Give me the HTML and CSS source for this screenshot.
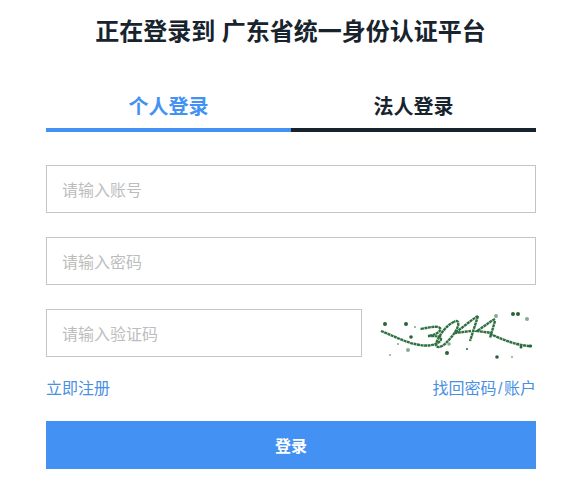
FILE: index.html
```html
<!DOCTYPE html>
<html lang="zh-CN">
<head>
  <meta charset="UTF-8">
  <meta name="viewport" content="width=device-width, initial-scale=1.0">
  <title>广东省统一身份认证平台</title>
  <link rel="stylesheet" href="styles.css">
</head>
<body>
  <div class="login">
    <h1 class="login-title">正在登录到 广东省统一身份认证平台</h1>

    <div class="tabs">
      <div class="tab tab-active">个人登录</div>
      <div class="tab">法人登录</div>
    </div>

    <input class="field" type="text" placeholder="请输入账号">
    <input class="field" type="password" placeholder="请输入密码">

    <div class="captcha-row">
      <input class="field field-code" type="text" placeholder="请输入验证码">
      <!-- captcha picture -->
      <svg class="captcha" width="174" height="65" viewBox="0 0 174 65">
        <g fill="none" stroke="#2f7040" stroke-width="2.4" stroke-dasharray="3 0.5">
          <!-- tail left and the 3 -->
          <path d="M11 30 C24 35 36 42 50 44 C62 46 72 42 71 37 C70 35 64 35 58 35 C66 34 72 30 70 27 C67 24 58 27 50 28"/>
          <!-- 0 -->
          <path d="M84 21 C76 24 68 36 66 43 C66 48 72 46 76 42 C82 36 90 26 88 21 C87 19 85 20 84 21"/>
          <!-- first 4 -->
          <path d="M108 15 C100 20 92 27 85 32 L101 30"/>
          <path d="M108 15 L100 40"/>
          <!-- second 4 and tail right -->
          <path d="M125 18 C118 22 112 27 107 30 L122 32"/>
          <path d="M125 20 L120 37"/>
          <path d="M120 33 C130 37 146 45 162 45"/>
        </g>
        <g fill="#2a6338">
          <circle cx="15" cy="23" r="2"/>
          <circle cx="36" cy="23" r="2"/>
          <circle cx="41" cy="36" r="1.8"/>
          <circle cx="45" cy="26" r="0.8"/>
          <circle cx="143" cy="13" r="2"/>
          <circle cx="148" cy="13" r="2"/>
          <circle cx="77" cy="52" r="2"/>
          <circle cx="97" cy="48" r="1"/>
          <circle cx="127" cy="56" r="1.8"/>
          <circle cx="151" cy="46" r="1.5"/>
          <circle cx="160" cy="45" r="1.5"/>
          <circle cx="28" cy="43" r="0.8"/>
        </g>
        <g fill="#86ad90">
          <circle cx="126" cy="15" r="2"/>
          <circle cx="157" cy="18" r="2"/>
          <circle cx="38" cy="49" r="2"/>
          <circle cx="79" cy="43" r="1.8"/>
          <circle cx="20" cy="54" r="1"/>
          <circle cx="142" cy="56" r="1"/>
        </g>
      </svg>
    </div>

    <div class="links">
      <a class="link" href="#">立即注册</a>
      <a class="link" href="#">找回密码<span class="link-slash">/</span>账户</a>
    </div>

    <button class="submit">登录</button>
  </div>
</body>
</html>
```

FILE: styles.css
```css
* {
  box-sizing: border-box;
}

body {
  margin: 0;
  background-color: #fff;
  font-family: "Liberation Sans", "Noto Sans CJK SC", sans-serif;
}

.login {
  width: 490px;
  margin-left: 46px;
  padding-top: 14px;
}

.login-title {
  margin: 0 0 0 -1px;
  height: 35px;
  line-height: 35px;
  font-size: 24px;
  font-weight: bold;
  text-align: center;
  color: #17232d;
}

.tabs {
  display: flex;
  margin-top: 39px;
  margin-bottom: 33px;
}

.tab {
  flex: 1;
  height: 44px;
  line-height: 38px;
  font-size: 20px;
  font-weight: bold;
  text-align: center;
  color: #17232d;
  border-bottom: 4px solid #17232d;
}

.tab-active {
  color: #4392f3;
  border-bottom-color: #4392f3;
}

.field {
  display: block;
  width: 100%;
  height: 48px;
  margin-bottom: 24px;
  padding: 4px 15px 0;
  border: 1px solid #c4c4c4;
  font-family: inherit;
  font-size: 16px;
  outline: none;
}

.field::placeholder {
  color: #bdbdbd;
}

.captcha-row {
  display: flex;
  justify-content: space-between;
  align-items: center;
  height: 48px;
}

.field-code {
  width: 316px;
  margin-bottom: 0;
}

.captcha {
  display: block;
  margin-right: -8px;
  flex: none;
}

.links {
  display: flex;
  justify-content: space-between;
  margin-top: 21px;
  margin-bottom: 21px;
  line-height: 22px;
  font-size: 16px;
}

.link {
  color: #4a90e2;
  text-decoration: none;
}

.link-slash {
  padding: 0 1.5px;
}

.submit {
  display: block;
  width: 100%;
  height: 48px;
  border: none;
  background-color: #4392f3;
  color: #fff;
  font-family: inherit;
  font-size: 16px;
  font-weight: bold;
}
```
